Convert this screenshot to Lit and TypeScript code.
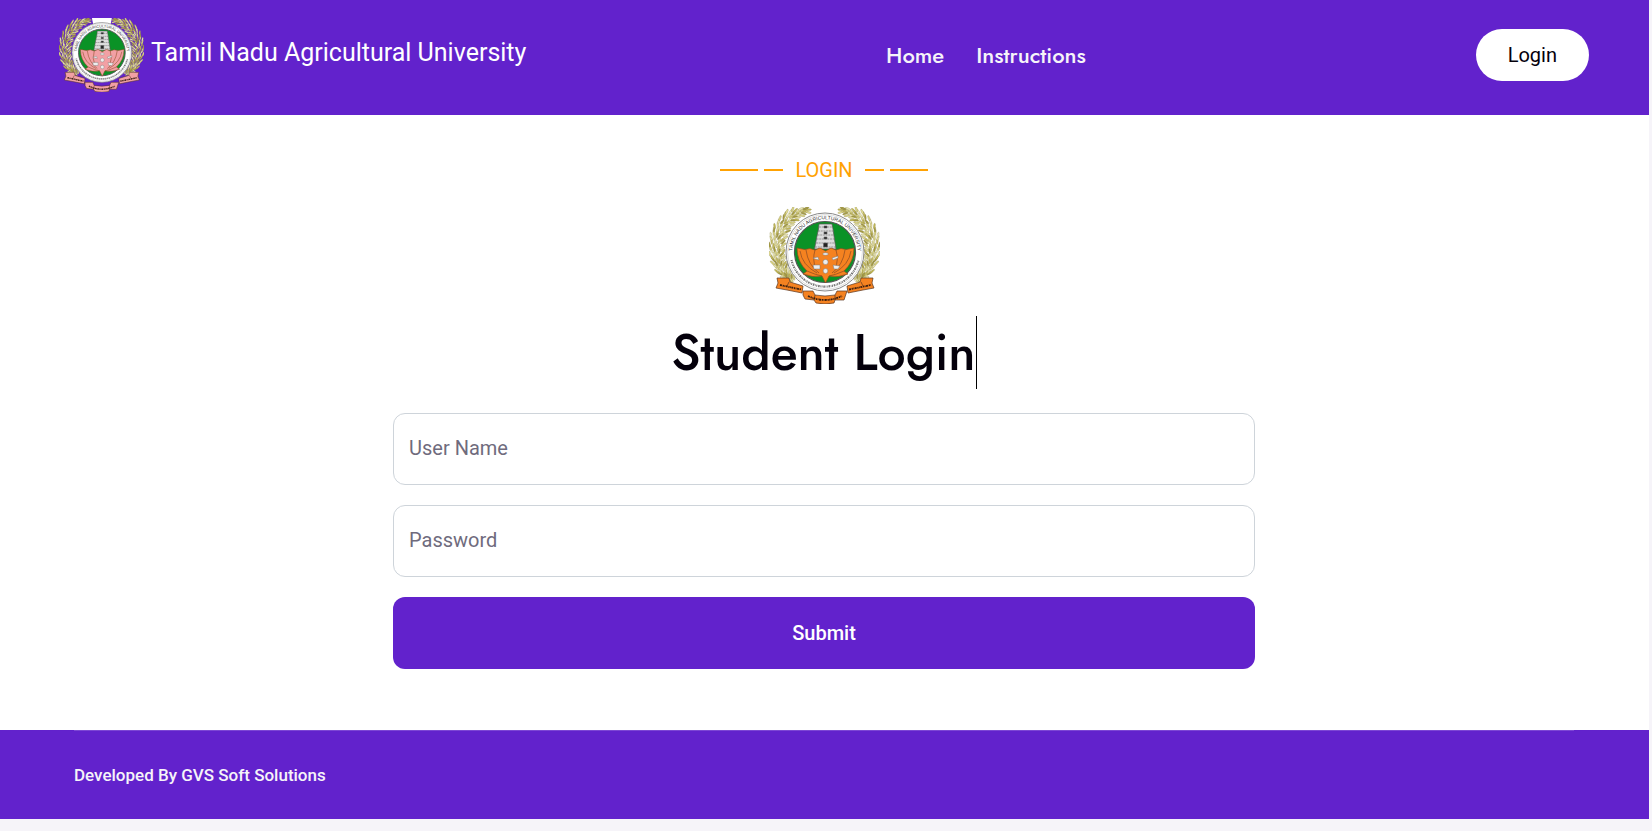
import { LitElement, html, css, svg } from "lit";
import { customElement, property } from "lit/decorators.js";

interface Grain {
  x: number;
  y: number;
  turn: number;
  tone: string;
}

const TONES = ["#ded88a", "#c4ba5a", "#f1eebd", "#a59b45", "#e6e09a"];

// Ears of grain that curve round one side of the seal.
const grains: Grain[] = [];
for (let i = 0; i < 34; i++) {
  for (let row = 0; row < 4; row++) {
    const angle = 138 + i * 3.3 + (row % 2) * 1.6;
    const swell = Math.sin(((i + 4) / 42) * Math.PI);
    const radius = 41 + row * (1.2 + 3 * swell) + ((i * 7 + row * 3) % 3);
    const rad = (angle * Math.PI) / 180;
    const y = 43 + Math.sin(rad) * radius;
    if (y < 1) continue;
    grains.push({
      x: Math.round((55.5 + Math.cos(rad) * radius) * 10) / 10,
      y: Math.round(y * 10) / 10,
      turn: angle + 90 + (row - 1.5) * -22 + ((i * 5) % 4) * 6,
      tone: TONES[(i * 3 + row * 2) % TONES.length],
    });
  }
}

@customElement("university-seal")
export class UniversitySeal extends LitElement {
  @property() accent = "#f58220";

  static styles = css`
    :host {
      display: block;
    }
    .seal {
      display: block;
      width: 100%;
      height: auto;
    }
    .motto {
      font: 400 5px "Liberation Sans", sans-serif;
      fill: #333;
    }
  `;

  private wreath() {
    return grains.map(
      (g) => svg`<ellipse cx=${g.x} cy=${g.y} rx="2.9" ry="0.9" fill=${g.tone}
        stroke="#8a8240" stroke-width="0.3" transform="rotate(${g.turn} ${g.x} ${g.y})"></ellipse>`
    );
  }

  render() {
    return html`
      <svg class="seal" viewBox="0 0 111 97" role="img" aria-label="University seal">
        <g>${this.wreath()}</g>
        <g transform="translate(111 0) scale(-1 1)">${this.wreath()}</g>
        <path d="M43 0H69L67 10H45Z" fill="#fff"></path>
        <circle cx="56" cy="45" r="39" fill="#fff" stroke="#888" stroke-width="1"></circle>
        <circle cx="56" cy="45" r="37.4" fill="none" stroke="#bbb" stroke-width="0.5"></circle>
        <circle cx="56" cy="45" r="30.5" fill="#0a9226" stroke="#555" stroke-width="1.2"></circle>
        <path id="upper" d="M24.200 52A32.600 32.600 0 1 1 87.800 52" fill="none"></path>
        <text class="motto"><textPath href="#upper" startOffset="50%" text-anchor="middle">TAMIL NADU AGRICULTURAL UNIVERSITY</textPath></text>
        <path d="M22.500 53A34.400 34.400 0 0 0 89.500 53" fill="none" stroke="#777" stroke-width="2.200"
          stroke-dasharray="1 .8 1.600 .7 .6 .6"></path>
        <path d="M50 17H63L64 22L65 29L67 42H45.500L48 29L49.500 22Z" fill="#dcdcdc" stroke="#555" stroke-width="0.7"></path>
        <g stroke="#666" stroke-width="0.6" fill="none">
          <path d="M50 20H63M49 24H64M48.500 28H65M47.500 32H65.500M47 36H66M46 40H67" stroke-dasharray="2 .7"></path>
          <path d="M55 19h3v2h-3zM55 25h3v2h-3zM55 30h3v2h-3zM54.500 36h4v4h-4z" fill="#222"></path>
        </g>
        <g fill=${this.accent} stroke="#8a4a22" stroke-width="0.7" stroke-linejoin="round">
          <path d="M28 41L36 42.500L41 41.500L46 43L51 41L56.500 44L62 41L67 43L72 41.500L77 42.500L85 41Q85 55 75 64L79 67Q69 71 60 69L56.500 76L53 69Q44 71 34 67L38 64Q28 55 28 41Z"></path>
          <path d="M31 44Q33 58 48 66M37 43Q39 58 50 66M76 43Q74 58 63 66M82 44Q80 58 65 66M46 43Q43 53 47 62M67 43Q70 53 66 62M38 64Q47 68 53 69M75 64Q66 68 60 69" fill="none"></path>
        </g>
        <g fill="#eee" stroke="#777" stroke-width="0.5">
          <circle cx="56.500" cy="55" r="2.600"></circle>
          <circle cx="56.500" cy="64" r="2.400"></circle>
          <ellipse cx="56.500" cy="47" rx="2.800" ry="1.300"></ellipse>
          <path d="M44 51l5-1 1 3-4-1zM63 51l6-2v2l-5 2zM44 58h7v4h-6zM64 58l7 1-2 3h-4z"></path>
        </g>
        <g fill=${this.accent} stroke="#59351f" stroke-width="0.7" stroke-linejoin="round">
          <path d="M8 71L20 71L21 75L34 79L33 86L18 83L7 81L9 76Z"></path>
          <path d="M104 71L92 71L91 75L78 79L79 86L94 83L105 81L103 76Z"></path>
          <path d="M34 84L44 84L46 88Q56 90 66 88L68 84L78 84L75 93L66 93L65 96Q56 98 47 96L45 93L36 92L34 88Z"></path>
          <path d="M46 88L45 93M66 88L66 93M20 75L18 79M92 75L94 79" fill="none"></path>
        </g>
        <g fill="none" stroke="#3a1e10" stroke-width="1.800" stroke-dasharray="2 .7 1.300 .5 .8 .5">
          <path d="M11 78L32 82.500"></path>
          <path d="M80 82.500L102 78"></path>
          <path d="M39 89Q56 97 73 89"></path>
        </g>
      </svg>
    `;
  }
}

@customElement("app-root")
export class AppRoot extends LitElement {
  static styles = css`
    :host {
      --violet: #6222cc;
      --ink: #04000b;
      --amber: #ffa203;
      display: block;
      box-sizing: border-box;
      min-height: 100vh;
      padding-right: 3px;
      background: #f6f4f9;
      color: var(--ink);
      font-family: Roboto, sans-serif;
      font-size: 20px;
      line-height: 30px;
    }
    * {
      box-sizing: border-box;
    }
    .bar {
      display: grid;
      grid-template-columns: 1fr auto 1fr;
      align-items: center;
      padding: 18px 60px 23px 59px;
      background: var(--violet);
      color: #fff;
    }
    .brand {
      display: flex;
      align-items: center;
      gap: 7px;
      color: inherit;
      font-size: 25px;
      text-decoration: none;
      white-space: nowrap;
    }
    .brand-name {
      padding-bottom: 4px;
    }
    .brand-seal {
      width: 85px;
    }
    .menu {
      display: flex;
      gap: 32px;
      padding-left: 324px;
      font-family: Jost, Lato, sans-serif;
      font-size: 22px;
      font-weight: 500;
    }
    .menu a {
      color: #f6f4f9;
      text-decoration: none;
    }
    .pill {
      justify-self: end;
      padding: 11px 32px;
      border-radius: 26px;
      background: #fff;
      color: var(--ink);
      text-decoration: none;
    }
    .content {
      display: flex;
      flex-direction: column;
      align-items: center;
      padding: 40px 25px 61px 24px;
      background: #fff;
    }
    .eyebrow {
      display: flex;
      align-items: center;
      gap: 6px;
      margin: 0;
      color: var(--amber);
      font-size: 20px;
      font-weight: 400;
    }
    .word {
      padding: 0 6px;
    }
    .dash {
      width: 19px;
      height: 2px;
      background: var(--amber);
    }
    .dash.long {
      width: 38px;
    }
    .seal {
      width: 111px;
      margin-top: 22px;
    }
    .title {
      margin: 12px 0 24px;
      border-right: 1px solid #000;
      font-family: Jost, Lato, sans-serif;
      font-size: 50px;
      font-weight: 500;
      line-height: 73px;
    }
    .form {
      display: grid;
      gap: 20px;
      width: 100%;
      max-width: 862px;
    }
    .field {
      display: grid;
    }
    .field > * {
      grid-area: 1 / 1;
    }
    .field label {
      align-self: center;
      padding: 0 16px 2px;
      color: #6f6b7d;
      pointer-events: none;
      z-index: 1;
    }
    .field input {
      width: 100%;
      height: 72px;
      padding: 0 16px;
      border: 1px solid #ced4da;
      border-radius: 12px;
      background: #fff;
      color: var(--ink);
      font: inherit;
    }
    .field:has(input:not(:placeholder-shown)) label {
      visibility: hidden;
    }
    .submit {
      height: 72px;
      border: 0;
      border-radius: 12px;
      background: var(--violet);
      color: #fff;
      font: inherit;
      font-weight: 500;
    }
    .footer {
      padding: 0 75px 0 74px;
      background: var(--violet);
      color: #f6f4f9;
      font-size: 17px;
      font-weight: 500;
    }
    .credit {
      margin: 0;
      padding: 29px 0;
      border-top: 1px solid #7c46d4;
    }
  `;

  render() {
    return html`
      <header class="bar">
        <a class="brand" href="#">
          <university-seal class="brand-seal" accent="#f2a0a4"></university-seal>
          <span class="brand-name">Tamil Nadu Agricultural University</span>
        </a>
        <nav class="menu">
          <a href="#home">Home</a>
          <a href="#instructions">Instructions</a>
        </nav>
        <a class="pill" href="#login">Login</a>
      </header>
      <main class="content">
        <p class="eyebrow">
          <span class="dash long"></span>
          <span class="dash"></span>
          <span class="word">LOGIN</span>
          <span class="dash"></span>
          <span class="dash long"></span>
        </p>
        <university-seal class="seal"></university-seal>
        <h1 class="title">Student Login</h1>
        <form class="form" id="login" @submit=${(e: Event) => e.preventDefault()}>
          <div class="field">
            <input id="user" type="text" placeholder=" " autocomplete="username" />
            <label for="user">User Name</label>
          </div>
          <div class="field">
            <input id="pass" type="password" placeholder=" " autocomplete="current-password" />
            <label for="pass">Password</label>
          </div>
          <button class="submit" type="submit">Submit</button>
        </form>
      </main>
      <footer class="footer">
        <p class="credit">Developed By GVS Soft Solutions</p>
      </footer>
    `;
  }
}
